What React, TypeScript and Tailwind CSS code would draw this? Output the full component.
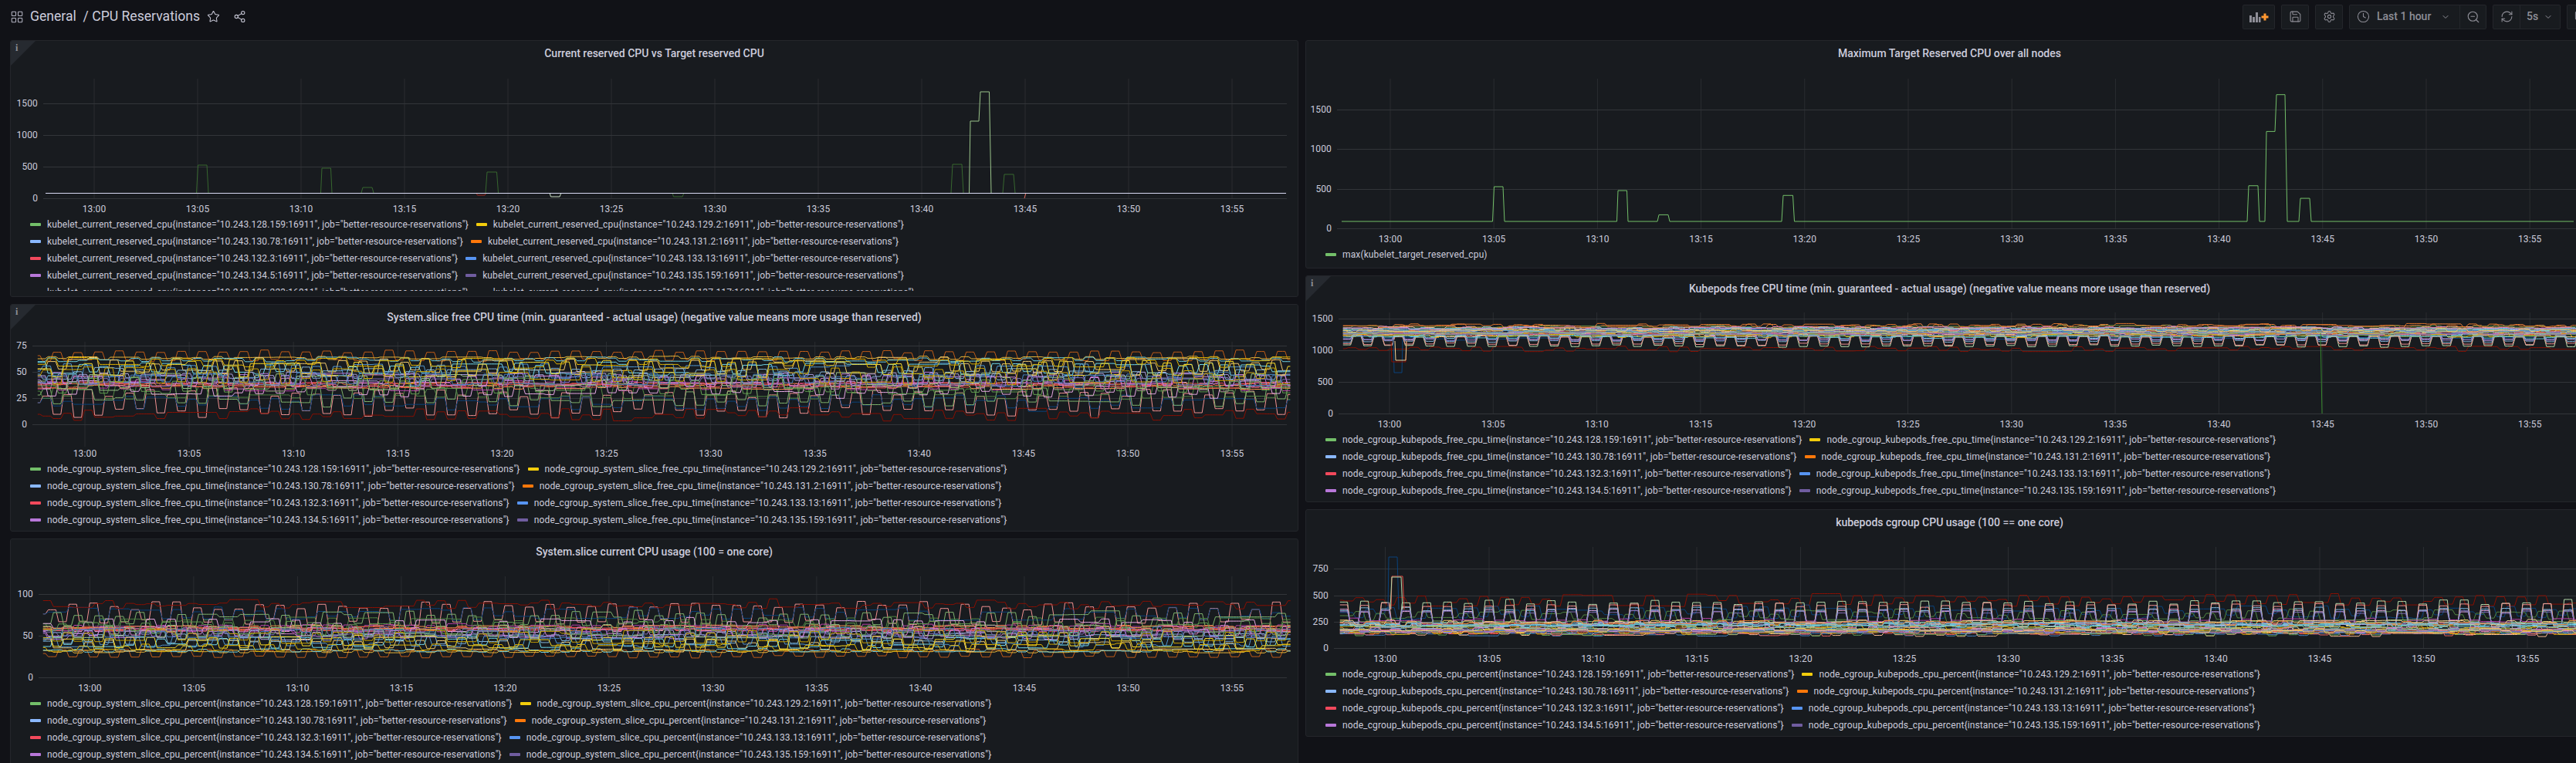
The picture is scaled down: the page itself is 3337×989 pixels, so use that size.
import React from 'react';
import { LayoutGrid, Star, Share2, Save, Settings, Clock, ChevronDown, ZoomOut, RefreshCw, Monitor } from 'lucide-react';

const INSTANCES = [
  '10.243.128.159',
  '10.243.129.2',
  '10.243.130.78',
  '10.243.131.2',
  '10.243.132.3',
  '10.243.133.13',
  '10.243.134.5',
  '10.243.135.159',
  '10.243.136.223',
  '10.243.137.117',
];
const LEGEND_COLORS = ['#73BF69', '#F2CC0C', '#8AB8FF', '#FF780A', '#F2495C', '#5794F2', '#B877D9', '#705DA0', '#37872D', '#E0B400'];
const PALETTE = [
  '#7EB26D', '#EAB839', '#6ED0E0', '#EF843C', '#E24D42', '#1F78C1', '#BA43A9', '#705DA0', '#508642', '#CCA300',
  '#447EBC', '#C15C17', '#F2C96D', '#F4D598', '#70DBED', '#F9BA8F', '#EA6460', '#82B5D8', '#D683CE', '#AEA2E0',
  '#629E51', '#E5AC0E', '#64B0C8', '#E0752D', '#5195CE', '#D683CE', '#806EB7', '#9AC48A', '#F2C96D', '#65C5DB',
];
const TIMES = ['13:00', '13:05', '13:10', '13:15', '13:20', '13:25', '13:30', '13:35', '13:40', '13:45', '13:50', '13:55'];

type Spec = [string, number, number, number, number?];
type Line = { color: string; d: string };

const rng = (seed: number) => () => {
  seed = (seed + 0x6d2b79f5) | 0;
  let t = Math.imul(seed ^ (seed >>> 15), 1 | seed);
  t = (t + Math.imul(t ^ (t >>> 7), 61 | t)) ^ t;
  return ((t ^ (t >>> 14)) >>> 0) / 4294967296;
};

// step series with a one minute on/off rhythm, like the scraped cgroup numbers.
// a fixed phase keeps the pulses of several nodes lined up, the rest drift and skip beats
const pulseLine = (seed: number, x0: number, x1: number, [color, center, swing, noise, fixed]: Spec): Line => {
  const rand = rng(seed);
  const step = 6.72;
  const phase = fixed ?? Math.floor(rand() * 4);
  let d = '';
  let y = center;
  let count = 0;
  for (let x = x0; x < x1; x += step, count++) {
    if ((count + phase) % 2 === 0 && (fixed !== undefined || rand() > 0.22)) {
      const up = Math.floor((count + phase) / 2) % 2 === 0;
      const amp = swing * (fixed !== undefined ? 0.75 + 0.25 * rand() : 0.5 + 0.5 * rand());
      y = center + (up ? -amp / 2 : amp / 2) + (rand() - 0.5) * noise;
    }
    d += `${d ? 'L' : 'M'}${(x + 1.8).toFixed(1)} ${y.toFixed(1)}L${(x + step - 1.8).toFixed(1)} ${y.toFixed(1)}`;
  }
  return { color, d };
};

const buildLines = (seed: number, x0: number, x1: number, specs: Spec[]) =>
  specs.map((s, i) => pulseLine(seed + i * 97, x0, x1, s));

const band = (seed: number, top: number, bottom: number, swing: number, noise: number, count = 30): Spec[] => {
  const rand = rng(seed);
  return PALETTE.slice(0, count).map((c) => [c, top + rand() * (bottom - top), swing * (0.4 + rand()), noise] as Spec);
};

const SYSTEM_FREE: Spec[] = [
  ['#F29191', 522, 30, 12, 3], ['#0A437C', 522, 16, 7], ['#890F02', 537, 8, 10], ['#7EB26D', 512, 26, 8], ['#508642', 507, 18, 6],
  ['#E5A8E2', 504, 20, 6], ['#BA43A9', 500, 12, 3], ['#C15C17', 461, 12, 3, 1],
  ['#EAB839', 464, 3, 2], ['#6ED0E0', 466, 5, 2], ['#F2C96D', 474, 18, 5], ['#70DBED', 478, 16, 5],
  ['#82B5D8', 485, 16, 5], ['#5195CE', 481, 18, 4], ['#EF843C', 498, 3, 2], ['#F9934E', 502, 4, 2],
  ['#E24D42', 500, 5, 2], ['#F2495C', 498, 5, 2], ['#B877D9', 492, 16, 4], ['#D683CE', 495, 16, 4],
  ['#AEA2E0', 490, 14, 4], ['#806EB7', 494, 12, 4], ['#FADE2A', 478, 20, 5], ['#E0B400', 470, 12, 3],
  ['#9AC48A', 494, 20, 6], ['#629E51', 500, 20, 5], ['#447EBC', 492, 16, 5], ['#CCA300', 487, 20, 6],
];
const SYSTEM_USAGE: Spec[] = SYSTEM_FREE.map(([c, y, s, n, f]) => [c, 847 - (y - 461) * 0.84, s * 0.84, n * 0.8, f]);

const KUBEPODS_FREE: Spec[] = [
  ['#890F02', 452, 4, 4], ['#0A437C', 436, 8, 3],
  ['#B7DBAB', 442, 15, 2, 2], ['#F29191', 441, 12, 2, 2], ['#82B5D8', 438, 10, 2, 2], ['#E5A8E2', 436, 9, 2, 2], ['#806EB7', 437, 8, 2, 2],
  ...band(11, 421, 437, 3, 3),
];
const KUBEPODS_USAGE: Spec[] = [
  ['#890F02', 778, 12, 7], ['#0A437C', 794, 14, 7], ['#508642', 798, 12, 6],
  ['#B7DBAB', 797, 38, 3, 0], ['#F29191', 797, 29, 3, 0], ['#E5A8E2', 800, 20, 3, 0], ['#82B5D8', 799, 22, 3, 0], ['#806EB7', 801, 18, 3, 0],
  ...band(23, 804, 822, 4, 4),
];

const spike = (a: number, b: number, c: number, d: number, top: number, base = 250) => `M${a} ${base}L${b} ${top}L${c} ${top}L${d} ${base}`;
const RESERVED_SPIKES: [string, string][] = [
  ['#37672f', spike(253.5, 255.5, 267, 269, 214)],
  ['#37672f', spike(414.5, 416, 427.5, 429, 218)],
  ['#37672f', spike(467, 469, 481, 483, 243)],
  ['#37672f', spike(628, 630, 642.5, 644.5, 223)],
  ['#a32a20', spike(616, 617.5, 627, 629, 253)],
  ['#c8dcc0', spike(711, 712.5, 724, 726, 255)],
  ['#37672f', spike(870, 871.5, 883, 885, 255)],
  ['#37672f', spike(1231, 1233, 1245, 1247, 213)],
  ['#9ac48a', 'M1254.5 250L1256 157L1267 157L1269 119L1280.5 119L1283 250'],
  ['#37672f', spike(1298, 1300, 1312, 1314, 226)],
  ['#e0685c', 'M1326 257L1328 250'],
];
const TARGET_PATH =
  'M1737 287' +
  [[253.5, 214, 255.5, 267, 269], [414.5, 218, 416, 427.5, 429], [467, 243, 469, 481, 483], [628, 223, 630, 642.5, 644.5], [1231, 213, 1233, 1245, 1247]]
    .map(([a, t, b, c, d]) => `L${a + 1679} 287L${b + 1679} ${296 - (257 - t) * 1.256}L${c + 1679} ${296 - (257 - t) * 1.256}L${d + 1679} 287`)
    .join('') +
  `L2933 287L2935 ${296 - 100 * 1.256}L2946 ${296 - 100 * 1.256}L2948 ${296 - 138 * 1.256}L2959 ${296 - 138 * 1.256}L2962 287L2977 287L2979 ${296 - 31 * 1.256}L2991 ${296 - 31 * 1.256}L2993 287L3333 287`;

type ChartProps = {
  x: number;
  top: number;
  height: number;
  plotLeft: number;
  plotRight: number;
  plotTop: number;
  plotBottom: number;
  firstTick: number;
  spacing: number;
  labelY: number;
  yTicks: [string, number][];
  children?: React.ReactNode;
};

// viewBox uses page coordinates so the numbers read straight off the screenshot
const Chart = ({ x, top, height, plotLeft, plotRight, plotTop, plotBottom, firstTick, spacing, labelY, yTicks, children }: ChartProps) => (
  <svg width={1669} height={height} viewBox={`${x} ${top} 1669 ${height}`} className="block shrink-0">
    {TIMES.map((t, i) => (
      <line key={t} x1={firstTick + i * spacing} x2={firstTick + i * spacing} y1={plotTop} y2={plotBottom} stroke="#2a2d31" />
    ))}
    {yTicks.map(([label, y]) => (
      <line key={label} x1={plotLeft} x2={plotRight} y1={y + 0.5} y2={y + 0.5} stroke="#323539" />
    ))}
    {children}
    {yTicks.map(([label, y]) => (
      <text key={label} x={plotLeft - 7} y={y + 4} textAnchor="end" fontSize={12} letterSpacing={0.13} fill="#ccccdc" fontFamily="Roboto, sans-serif">
        {label}
      </text>
    ))}
    {TIMES.map((t, i) => (
      <text key={t} x={firstTick + i * spacing} y={labelY + 4} textAnchor="middle" fontSize={12} letterSpacing={0.13} fill="#ccccdc" fontFamily="Roboto, sans-serif">
        {t}
      </text>
    ))}
  </svg>
);

const Lines = ({ lines }: { lines: Line[] }) => (
  <>
    {lines.map((l, i) => (
      <path key={i} d={l.d} fill="none" stroke={l.color} strokeWidth={1} />
    ))}
  </>
);

const LegendItem = ({ color, label }: { color: string; label: string }) => (
  <div className="flex items-center h-[22px] mr-[10px] text-[12px] tracking-[0.13px] text-[#ccccdc] whitespace-nowrap">
    <i className="w-[14px] h-[4px] mr-[8px] rounded-[1px]" style={{ backgroundColor: color }} />
    {label}
  </div>
);

const Legend = ({ metric, count = 8, clip }: { metric: string; count?: number; clip?: string }) => (
  <div className={`flex flex-wrap pl-[25px] overflow-hidden ${clip ?? ''}`}>
    {INSTANCES.slice(0, count).map((inst, i) => (
      <LegendItem key={inst} color={LEGEND_COLORS[i]} label={`${metric}{instance="${inst}:16911", job="better-resource-reservations"}`} />
    ))}
  </div>
);

const Panel = ({ title, info, height, children }: { title: string; info?: boolean; height: string; children: React.ReactNode }) => (
  <section className={`relative w-[1669px] ${height} shrink-0 overflow-hidden rounded-[3px] border border-[#24262b] bg-[#181b1f]`}>
    {info && (
      <div className="absolute left-0 top-0 w-0 h-0 border-t-[32px] border-r-[32px] border-t-[#262a30] border-r-transparent">
        <span className="absolute left-[6px] top-[-30px] text-[12px] leading-[14px] font-bold text-[#8e9097] font-['Liberation_Serif',serif]">i</span>
      </div>
    )}
    <h2 className="flex items-center justify-center h-[33px] text-[14px] font-medium text-[#ccccdc]">{title}</h2>
    {children}
  </section>
);

const IconButton = ({ children, width }: { children: React.ReactNode; width: string }) => (
  <button className={`flex items-center justify-center ${width} h-[32px] rounded-[2px] border border-[#24262b] bg-[#181b1f] text-[#8e8e97]`}>{children}</button>
);

const Toolbar = () => (
  <div className="ml-auto mr-[-24px] flex items-center gap-2 text-[#8e8e97]">
    <IconButton width="w-[42px]">
      <svg width="25" height="14" viewBox="0 0 25 14">
        <path d="M0 5h3v9H0zM4 7h3v7H4zM8 1h3v13H8zM12 7h2.500v7H12z" fill="#8e8e97" />
        <path d="M18.500 2.500h3v3h3v3h-3v3h-3v-3h-3v-3h3z" fill="#ff9830" />
      </svg>
    </IconButton>
    <IconButton width="w-[36px]">
      <Save size={17} strokeWidth={1.5} />
    </IconButton>
    <IconButton width="w-[36px]">
      <Settings size={17} strokeWidth={1.5} />
    </IconButton>
    <div className="flex items-center h-[32px] w-[178px] rounded-[2px] border border-[#24262b] bg-[#181b1f] text-[14px] font-medium">
      <div className="flex items-center h-full w-[142px] pl-[9px]">
        <Clock size={17} strokeWidth={1.5} className="mr-[9px]" />
        Last 1 hour
        <ChevronDown size={12} className="ml-[13px]" />
      </div>
      <div className="flex items-center justify-center flex-1 h-full border-l border-[#24262b]">
        <ZoomOut size={18} strokeWidth={1.5} />
      </div>
    </div>
    <div className="flex items-center h-[32px] w-[88px] rounded-[2px] border border-[#24262b] bg-[#181b1f] text-[14px] font-medium">
      <div className="flex items-center justify-center w-[35px] h-full border-r border-[#24262b]">
        <RefreshCw size={17} strokeWidth={1.5} />
      </div>
      <span className="ml-[8px]">5s</span>
      <ChevronDown size={12} className="ml-[7px]" />
    </div>
    <IconButton width="w-[36px]">
      <Monitor size={17} strokeWidth={1.5} />
    </IconButton>
  </div>
);

const systemFree = buildLines(101, 46, 1666, SYSTEM_FREE);
const systemUsage = buildLines(202, 53, 1666, SYSTEM_USAGE);
const kubepodsFree = buildLines(303, 1737, 3337, KUBEPODS_FREE);
const kubepodsUsage = buildLines(404, 1733, 3337, KUBEPODS_USAGE);

export default function App() {
  return (
    <div className="h-[989px] w-[3337px] overflow-hidden bg-[#111217] font-['Roboto',sans-serif]">
      <header className="flex items-center h-[52px] pl-[13px] pb-[11px] pt-[2px]">
        <LayoutGrid size={18} strokeWidth={1.4} className="text-[#b4b4c2]" />
        <h1 className="ml-[8px] text-[17.6px] text-[#ccccdc] whitespace-pre">General  / CPU Reservations</h1>
        <Star size={17} strokeWidth={1.5} className="ml-[9px] text-[#c4c4d2]" />
        <Share2 size={17} strokeWidth={1.5} className="ml-[17px] text-[#c4c4d2]" />
        <Toolbar />
      </header>
      <main className="flex gap-[9px] pl-[13px]">
        <div className="flex flex-col gap-[9px] w-[1669px] shrink-0">
          <Panel title="Current reserved CPU vs Target reserved CPU" info height="h-[333px]">
            <Chart x={13} top={86} height={194} plotLeft={55} plotRight={1666} plotTop={102} plotBottom={257} firstTick={121} spacing={134} labelY={271}
              yTicks={[['1500', 134], ['1000', 175], ['500', 216], ['0', 257]]}>
              {RESERVED_SPIKES.map(([c, d], i) => (
                <path key={i} d={d} fill="none" stroke={c} strokeWidth={1} />
              ))}
              <path d="M58 250.5H1665" stroke="#d8d9f2" strokeWidth={1.2} />
            </Chart>
            <Legend metric="kubelet_current_reserved_cpu" count={10} clip="h-[97px]" />
          </Panel>
          <Panel title="System.slice free CPU time (min. guaranteed - actual usage) (negative value means more usage than reserved)" info height="h-[295px]">
            <Chart x={13} top={428} height={169} plotLeft={41} plotRight={1666} plotTop={443} plotBottom={579} firstTick={109} spacing={135.1} labelY={588}
              yTicks={[['75', 448], ['50', 482], ['25', 516], ['0', 550]]}>
              <Lines lines={systemFree} />
            </Chart>
            <Legend metric="node_cgroup_system_slice_free_cpu_time" />
          </Panel>
          <Panel title="System.slice current CPU usage (100 = one core)" height="h-[295px]">
            <Chart x={13} top={732} height={169} plotLeft={49} plotRight={1666} plotTop={747} plotBottom={878} firstTick={115.4} spacing={134.5} labelY={892}
              yTicks={[['100', 770], ['50', 824], ['0', 878]]}>
              <Lines lines={systemUsage} />
            </Chart>
            <Legend metric="node_cgroup_system_slice_cpu_percent" />
          </Panel>
        </div>
        <div className="flex flex-col gap-[9px] w-[1669px] shrink-0">
          <Panel title="Maximum Target Reserved CPU over all nodes" height="h-[296px]">
            <Chart x={1691} top={86} height={233} plotLeft={1731} plotRight={3344} plotTop={102} plotBottom={296} firstTick={1800} spacing={134.2} labelY={310}
              yTicks={[['1500', 142], ['1000', 193], ['500', 245], ['0', 296]]}>
              <path d={TARGET_PATH} fill="none" stroke="#73BF69" strokeWidth={1} />
            </Chart>
            <div className="pl-[25px]">
              <LegendItem color="#73BF69" label="max(kubelet_target_reserved_cpu)" />
            </div>
          </Panel>
          <Panel title="Kubepods free CPU time (min. guaranteed - actual usage) (negative value means more usage than reserved)" info height="h-[294px]">
            <Chart x={1691} top={391} height={168} plotLeft={1733} plotRight={3344} plotTop={405} plotBottom={536} firstTick={1799} spacing={134.3} labelY={550}
              yTicks={[['1500', 413], ['1000', 454], ['500', 495], ['0', 536]]}>
              <Lines lines={kubepodsFree} />
              <path d="M1804 440L1805 483L1815 483L1816 440" fill="none" stroke="#0A437C" />
              <path d="M1801 442L1802 469L1820 469L1821 442" fill="none" stroke="#890F02" />
              <path d="M1806 442L1807 467L1820 467L1821 442" fill="none" stroke="#F4D598" />
              <path d="M3005 432L3007 536" fill="none" stroke="#37872D" />
            </Chart>
            <Legend metric="node_cgroup_kubepods_free_cpu_time" />
          </Panel>
          <Panel title="kubepods cgroup CPU usage (100 == one core)" height="h-[295px]">
            <Chart x={1691} top={694} height={169} plotLeft={1727} plotRight={3344} plotTop={709} plotBottom={840} firstTick={1793.5} spacing={134.5} labelY={854}
              yTicks={[['750', 737], ['500', 772], ['250', 806], ['0', 840]]}>
              <Lines lines={kubepodsUsage} />
              <path d="M1797 790L1798 722L1809 722L1811 790" fill="none" stroke="#0A437C" />
              <path d="M1801 790L1802 747L1816 747L1818 790" fill="none" stroke="#E24D42" />
              <path d="M1800 790L1802 748L1814 748L1816 790" fill="none" stroke="#B7DBAB" />
            </Chart>
            <Legend metric="node_cgroup_kubepods_cpu_percent" />
          </Panel>
        </div>
      </main>
    </div>
  );
}
